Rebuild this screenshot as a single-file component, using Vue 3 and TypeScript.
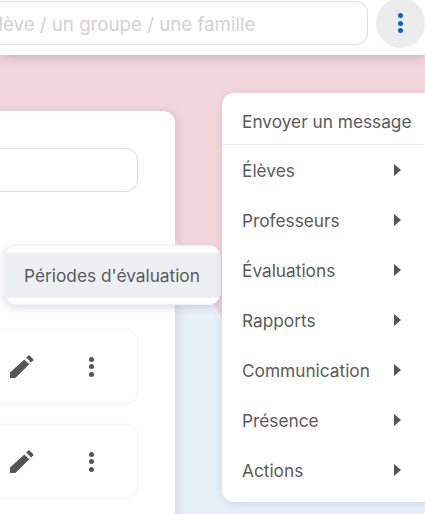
<script setup lang="ts">
const menuItems = ['Élèves', 'Professeurs', 'Évaluations', 'Rapports', 'Communication', 'Présence', 'Actions'];
const rows = [1, 2];
</script>

<template>
    <div class="page">
        <header class="topbar">
            <input class="search" type="text" placeholder="Chercher un élève / un groupe / une famille" />
            <button class="round-btn" type="button">
                <span class="dot"></span>
                <span class="dot"></span>
                <span class="dot"></span>
            </button>
        </header>

        <main class="content">
            <section class="card">
                <div class="field"></div>
                <div class="rows">
                    <div v-for="row in rows" :key="row" class="row">
                        <svg class="pencil" width="24" height="24" viewBox="0 0 24 24">
                            <path d="M0 23V17.6L14.3 4.4 19.3 9.3 5.4 23Z" />
                            <path d="M16.2 2.6 18.4.6a1 1 0 0 1 1.2 0l3.6 3.6a1 1 0 0 1 0 1.2L21 7.6Z" />
                        </svg>
                        <span class="row-dots">
                            <span class="dot"></span>
                            <span class="dot"></span>
                            <span class="dot"></span>
                        </span>
                    </div>
                </div>
            </section>

            <div class="popup">
                <div class="popup-item">Périodes d'évaluation</div>
            </div>

            <nav class="menu">
                <div class="menu-head">Envoyer un message</div>
                <div v-for="item in menuItems" :key="item" class="menu-item">
                    <span>{{ item }}</span>
                    <i class="arrow"></i>
                </div>
            </nav>
        </main>
    </div>
</template>

<style scoped>
.page {
    width: 425px;
    height: 514px;
    overflow: hidden;
    font-family: Inter, 'Noto Sans', sans-serif;
    color: #5a5a5a;
}

.topbar {
    position: relative;
    z-index: 2;
    height: 55px;
    display: flex;
    align-items: flex-start;
    background: #fff;
    box-shadow: 0 2px 10px rgba(90, 60, 70, 0.28);
}

.search {
    flex: none;
    box-sizing: border-box;
    width: 512px;
    height: 44px;
    margin: 1px 8px 0 -144px;
    padding: 2px 16px 0;
    border: 1px solid #dcdcdc;
    border-radius: 12px;
    background: #fff;
    font: 18.7px Inter, 'Noto Sans', sans-serif;
    outline: none;
}

.search::placeholder {
    color: #d2d2d2;
    opacity: 1;
}

.round-btn {
    flex: none;
    width: 49px;
    height: 50px;
    margin-top: -2px;
    padding: 0;
    border: 0;
    border-radius: 50%;
    background: #ececec;
    display: flex;
    flex-direction: column;
    align-items: center;
    justify-content: center;
    gap: 2.5px;
}

.dot {
    display: block;
    width: 5px;
    height: 5px;
    border-radius: 50%;
    background: #0a5fd0;
}

.content {
    position: relative;
    height: 459px;
    padding-top: 56px;
    box-sizing: border-box;
    background: #e8f0f9;
}

/* pink shape behind the panels, its slanted edge shows next to the menu */
.content::before {
    content: '';
    position: absolute;
    inset: 0;
    background: #f4d7dc;
    clip-path: polygon(0 0, 425px 0, 425px 345px, 270px 345px, 176px 185px, 0 185px);
}

.card {
    position: relative;
    box-sizing: border-box;
    width: 215px;
    height: 420px;
    margin-left: -40px;
    padding: 37px 37px 0 0;
    border-radius: 0 12px 0 0;
    background: #fff;
    box-shadow: 3px 0 10px rgba(90, 70, 90, 0.14);
}

.field {
    height: 44px;
    box-sizing: border-box;
    border: 1px solid #dcdcdc;
    border-radius: 12px;
}

.rows {
    display: flex;
    flex-direction: column;
    gap: 20px;
    margin-top: 137px;
}

.row {
    box-sizing: border-box;
    height: 75px;
    padding-left: 49px;
    display: flex;
    align-items: center;
    border: 1px solid #eef2fa;
    border-radius: 12px;
}

.pencil {
    flex: none;
    fill: #555;
    margin-top: 1px;
}

.row-dots {
    display: flex;
    flex-direction: column;
    gap: 2.5px;
    margin-left: 55px;
}

.row-dots .dot {
    background: #555;
}

.popup {
    position: absolute;
    left: 4px;
    top: 190px;
    width: 217px;
    height: 60px;
    box-sizing: border-box;
    padding: 7px 0;
    background: #fff;
    border: 1px solid #eef1fa;
    border-radius: 12px;
    box-shadow: 0 3px 8px rgba(70, 80, 110, 0.18);
}

.popup-item {
    height: 45px;
    padding-left: 19px;
    display: flex;
    align-items: center;
    background: #ecf0f1;
    font-size: 17.28px;
}

.menu {
    position: absolute;
    left: 222px;
    top: 38px;
    width: 220px;
    height: 409px;
    box-sizing: border-box;
    background: #fff;
    border-radius: 12px;
    box-shadow: 0 2px 8px rgba(70, 80, 110, 0.16);
    font-size: 17.28px;
}

.menu-head {
    height: 52px;
    padding: 5px 0 0 20px;
    display: flex;
    align-items: center;
    box-sizing: border-box;
    border-bottom: 1px solid #e6edf6;
}

.menu-item {
    box-sizing: border-box;
    height: 50px;
    width: 179px;
    padding-left: 20px;
    display: flex;
    align-items: center;
    justify-content: space-between;
}

.arrow {
    width: 0;
    height: 0;
    border-left: 7px solid #555;
    border-top: 6px solid transparent;
    border-bottom: 6px solid transparent;
}
</style>
